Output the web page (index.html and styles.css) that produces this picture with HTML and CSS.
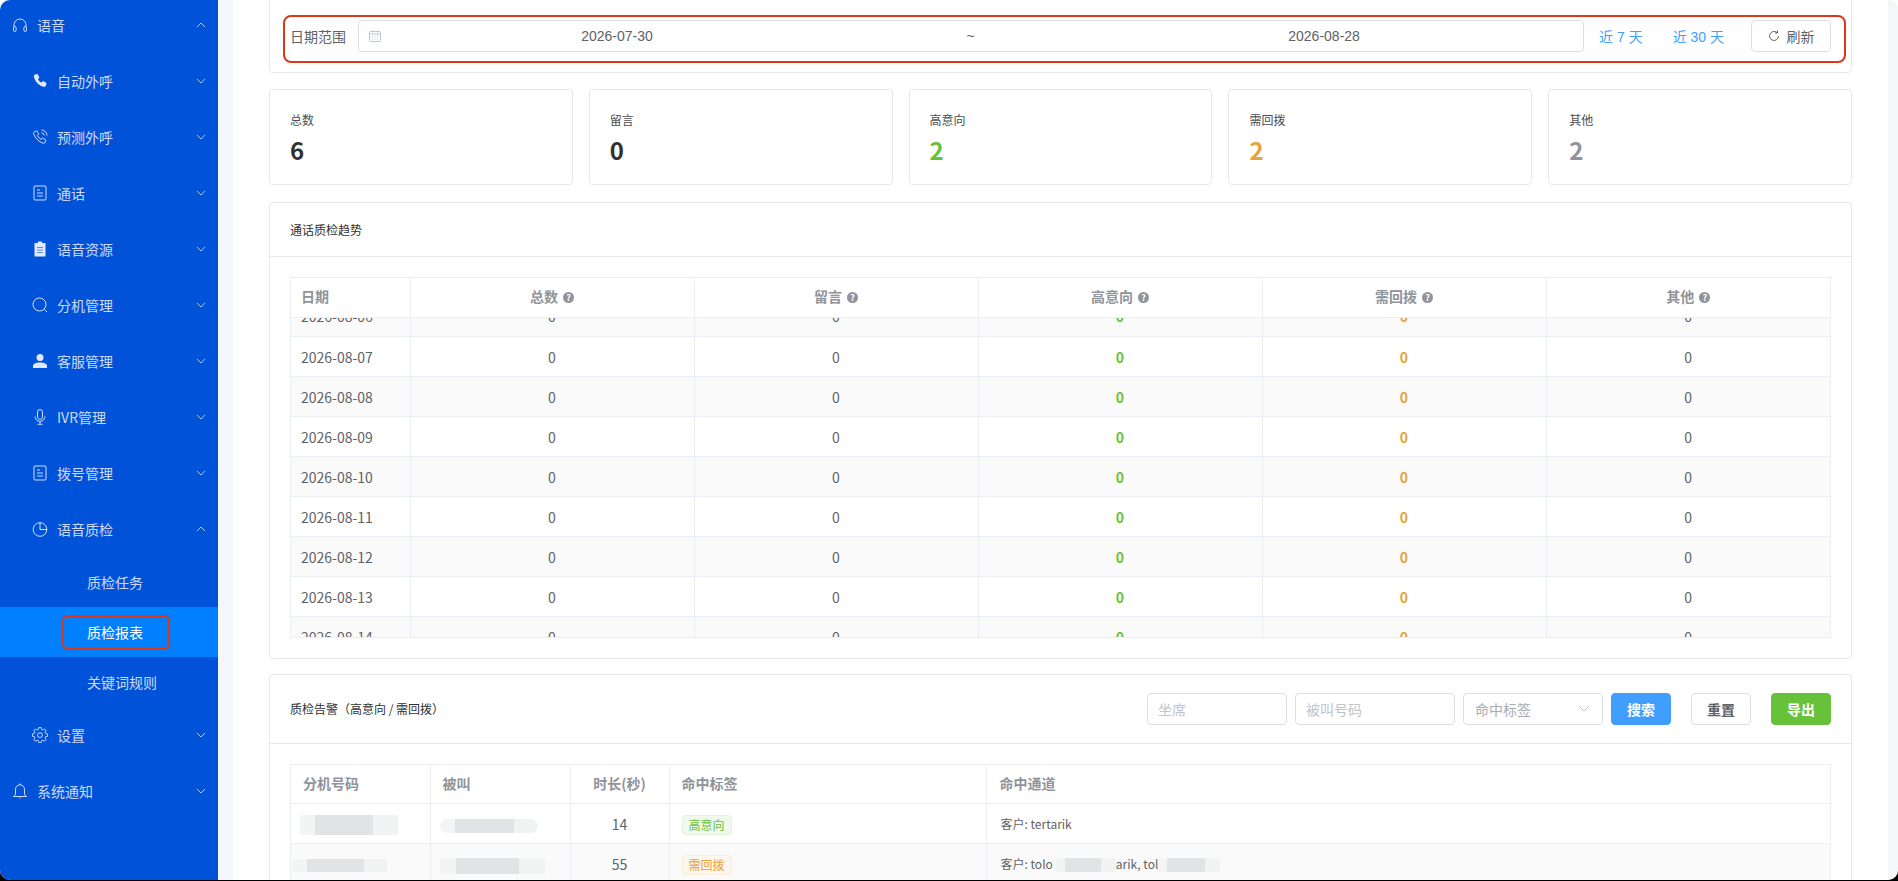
FILE: index.html
```html
<!DOCTYPE html>
<html lang="zh-CN">
<head>
  <meta charset="UTF-8">
  <meta name="viewport" content="width=device-width, initial-scale=1.0">
  <title>质检报表</title>
  <link rel="stylesheet" href="styles.css">
</head>
<body>
  <div class="frame">
    <div class="app">
      <aside class="sidebar">
        <nav class="nav">
          <a class="nav-item">
            <svg class="nav-icon" viewBox="0 0 16 16"><path class="line" d="M2 10V8a6 6 0 0 1 12 0v2"/><rect class="line" x="1.5" y="9.5" width="2.6" height="5" rx="1.3"/><rect class="line" x="11.9" y="9.5" width="2.6" height="5" rx="1.3"/></svg>
            <span>语音</span>
            <svg class="chevron" viewBox="0 0 10 6"><path d="M1 5l4-4 4 4"/></svg>
          </a>
          <a class="nav-item child">
            <svg class="nav-icon" viewBox="0 0 16 16"><path class="solid" d="M3 1.5L5.5 1l2 3.5L6 6c.6 1.6 2 3 3.5 3.6l1.5-1.5 3.5 2-.5 2.5c-.3.9-1.5 1.4-2.5 1.2C7 12.6 3.4 9 1.9 4c-.2-1 .3-2 1.1-2.5z"/></svg>
            <span>自动外呼</span>
            <svg class="chevron" viewBox="0 0 10 6"><path d="M1 1l4 4 4-4"/></svg>
          </a>
          <a class="nav-item child">
            <svg class="nav-icon" viewBox="0 0 16 16"><path class="line" d="M2.6 2.6L4.8 2l2 3.2L5.4 6.6c.8 1.6 2.2 3 3.8 3.8l1.4-1.4 3.2 2-.6 2.2c-.4.8-1.3 1.2-2.1 1C6.900 13 3 9.100 1.600 4.700c-.2-.8.2-1.700 1-2.100z"/><path class="line" d="M9.500 1a5.500 5.500 0 0 1 5.500 5.500M9.500 3.800a2.700 2.700 0 0 1 2.700 2.700"/></svg>
            <span>预测外呼</span>
            <svg class="chevron" viewBox="0 0 10 6"><path d="M1 1l4 4 4-4"/></svg>
          </a>
          <a class="nav-item child">
            <svg class="nav-icon" viewBox="0 0 16 16"><rect class="line" x="2" y="1" width="12" height="14" rx="1"/><path class="line" d="M5 5h3M5 8h6M5 11h6"/></svg>
            <span>通话</span>
            <svg class="chevron" viewBox="0 0 10 6"><path d="M1 1l4 4 4-4"/></svg>
          </a>
          <a class="nav-item child">
            <svg class="nav-icon" viewBox="0 0 16 16"><path class="solid" d="M6 0.500h4V2h3.500v13.500h-11V2H6z"/><path class="cut" d="M5 6.500h6M5 9h6M5 11.500h6"/></svg>
            <span>语音资源</span>
            <svg class="chevron" viewBox="0 0 10 6"><path d="M1 1l4 4 4-4"/></svg>
          </a>
          <a class="nav-item child">
            <svg class="nav-icon" viewBox="0 0 16 16"><circle class="line" cx="7.500" cy="7.500" r="6.500"/><path class="line" d="M12.500 12.500l2.500 2.500"/></svg>
            <span>分机管理</span>
            <svg class="chevron" viewBox="0 0 10 6"><path d="M1 1l4 4 4-4"/></svg>
          </a>
          <a class="nav-item child">
            <svg class="nav-icon" viewBox="0 0 16 16"><circle class="solid" cx="8" cy="4.500" r="3.500"/><path class="solid" d="M1 15v-2c0-2 2.500-3.500 7-3.500s7 1.500 7 3.500v2z"/></svg>
            <span>客服管理</span>
            <svg class="chevron" viewBox="0 0 10 6"><path d="M1 1l4 4 4-4"/></svg>
          </a>
          <a class="nav-item child">
            <svg class="nav-icon" viewBox="0 0 16 16"><rect class="line" x="5.500" y="0.500" width="5" height="10" rx="2.500"/><path class="line" d="M3 7.500a5 5 0 0 0 10 0M8 12.500V15M5.500 15.300h5"/></svg>
            <span>IVR管理</span>
            <svg class="chevron" viewBox="0 0 10 6"><path d="M1 1l4 4 4-4"/></svg>
          </a>
          <a class="nav-item child">
            <svg class="nav-icon" viewBox="0 0 16 16"><rect class="line" x="2" y="1" width="12" height="14" rx="1"/><path class="line" d="M5 5h3M5 8h6M5 11h6"/></svg>
            <span>拨号管理</span>
            <svg class="chevron" viewBox="0 0 10 6"><path d="M1 1l4 4 4-4"/></svg>
          </a>
          <a class="nav-item child">
            <svg class="nav-icon" viewBox="0 0 16 16"><circle class="line" cx="8" cy="8.500" r="6.800"/><path class="line" d="M8 1.700v6.800h6.800"/></svg>
            <span>语音质检</span>
            <svg class="chevron" viewBox="0 0 10 6"><path d="M1 5l4-4 4 4"/></svg>
          </a>
          <a class="sub-item">质检任务</a>
          <a class="sub-item active"><span class="mark">质检报表</span></a>
          <a class="sub-item">关键词规则</a>
          <a class="nav-item child">
            <svg class="nav-icon" viewBox="-0.500 0.500 17 17"><path class="line" d="M6.800 1h2.400l.4 2 1.500.7 1.800-1.100 1.600 1.600-1.100 1.800.7 1.500 2 .4v2.400l-2 .4-.7 1.500 1.100 1.800-1.600 1.600-1.800-1.100-1.500.7-.4 2H6.800l-.4-2-1.500-.7-1.800 1.100-1.600-1.600 1.100-1.800-.7-1.500-2-.4V7.900l2-.4.7-1.500-1.100-1.800 1.600-1.600 1.800 1.100 1.500-.7z"/><circle class="line" cx="8" cy="9.100" r="2.600"/></svg>
            <span>设置</span>
            <svg class="chevron" viewBox="0 0 10 6"><path d="M1 1l4 4 4-4"/></svg>
          </a>
          <a class="nav-item">
            <svg class="nav-icon" viewBox="0 0 16 16"><path class="line" d="M8 1.800a4.500 4.500 0 0 0-4.500 4.500v5.200L1.500 13.500h13l-2-2V6.300A4.500 4.500 0 0 0 8 1.800zM8 .5v1.300M8 14.500v1"/></svg>
            <span>系统通知</span>
            <svg class="chevron" viewBox="0 0 10 6"><path d="M1 1l4 4 4-4"/></svg>
          </a>
        </nav>
      </aside>

      <main class="main">
        <div class="content">
          <section class="card filter-card">
            <form class="date-form">
              <label class="date-label">日期范围</label>
              <div class="date-range">
                <svg class="calendar" viewBox="0 0 12 12"><rect x="0.500" y="1.500" width="11" height="10" rx="1"/><path d="M0.500 4h11M3 0.500v2M9 0.500v2M3 6.500h1M5.500 6.500h1M8 6.500h1M3 9h1M5.500 9h1M8 9h1"/></svg>
                <span class="date-value">2026-07-30</span>
                <span class="date-value">~</span>
                <span class="date-value">2026-08-28</span>
              </div>
              <a class="quick first">近 7 天</a>
              <a class="quick">近 30 天</a>
              <button type="button" class="refresh">
                <svg class="refresh-icon" viewBox="0 0 12 12"><path d="M10.500 6A4.500 4.500 0 1 1 9 2.600"/><path d="M9.500 0.500v2.500H7"/></svg>
                刷新
              </button>
            </form>
          </section>

          <section class="stats">
            <div class="card stat"><div class="stat-label">总数</div><div class="stat-value">6</div></div>
            <div class="card stat"><div class="stat-label">留言</div><div class="stat-value">0</div></div>
            <div class="card stat"><div class="stat-label">高意向</div><div class="stat-value green">2</div></div>
            <div class="card stat"><div class="stat-label">需回拨</div><div class="stat-value orange">2</div></div>
            <div class="card stat"><div class="stat-label">其他</div><div class="stat-value gray">2</div></div>
          </section>

          <section class="card panel">
            <div class="panel-head trend-head">通话质检趋势</div>
            <div class="panel-body">
              <div class="table-wrap">
                <table class="trend">
                  <thead>
                    <tr>
                      <th class="date-col">日期</th>
                      <th>总数 <span class="help">?</span></th>
                      <th>留言 <span class="help">?</span></th>
                      <th>高意向 <span class="help">?</span></th>
                      <th>需回拨 <span class="help">?</span></th>
                      <th>其他 <span class="help">?</span></th>
                    </tr>
                  </thead>
                </table>
                <div class="trend-scroll">
                  <table class="trend trend-rows">
                    <tbody>
                      <tr><td class="date-col">2026-08-06</td><td>0</td><td>0</td><td class="green">0</td><td class="orange">0</td><td>0</td></tr>
                      <tr><td class="date-col">2026-08-07</td><td>0</td><td>0</td><td class="green">0</td><td class="orange">0</td><td>0</td></tr>
                      <tr><td class="date-col">2026-08-08</td><td>0</td><td>0</td><td class="green">0</td><td class="orange">0</td><td>0</td></tr>
                      <tr><td class="date-col">2026-08-09</td><td>0</td><td>0</td><td class="green">0</td><td class="orange">0</td><td>0</td></tr>
                      <tr><td class="date-col">2026-08-10</td><td>0</td><td>0</td><td class="green">0</td><td class="orange">0</td><td>0</td></tr>
                      <tr><td class="date-col">2026-08-11</td><td>0</td><td>0</td><td class="green">0</td><td class="orange">0</td><td>0</td></tr>
                      <tr><td class="date-col">2026-08-12</td><td>0</td><td>0</td><td class="green">0</td><td class="orange">0</td><td>0</td></tr>
                      <tr><td class="date-col">2026-08-13</td><td>0</td><td>0</td><td class="green">0</td><td class="orange">0</td><td>0</td></tr>
                      <tr><td class="date-col">2026-08-14</td><td>0</td><td>0</td><td class="green">0</td><td class="orange">0</td><td>0</td></tr>
                    </tbody>
                  </table>
                </div>
              </div>
            </div>
          </section>

          <section class="card panel">
            <div class="panel-head alert-head">
              <span>质检告警（高意向 / 需回拨）</span>
              <div class="filters">
                <input class="field agent" placeholder="坐席">
                <input class="field callee" placeholder="被叫号码">
                <div class="field select">命中标签<svg class="select-arrow" viewBox="0 0 12 7"><path d="M1 1l5 5 5-5"/></svg></div>
                <button type="button" class="btn primary">搜索</button>
                <button type="button" class="btn plain">重置</button>
                <button type="button" class="btn success">导出</button>
              </div>
            </div>
            <div class="panel-body">
              <div class="table-wrap">
                <table class="alerts">
                  <thead>
                    <tr>
                      <th class="col-ext">分机号码</th>
                      <th class="col-callee">被叫</th>
                      <th class="col-time">时长(秒)</th>
                      <th class="col-tag">命中标签</th>
                      <th>命中通道</th>
                    </tr>
                  </thead>
                  <tbody>
                    <tr>
                      <td><span class="blur blur-a"></span></td>
                      <td><span class="blur blur-b"></span></td>
                      <td class="col-time">14</td>
                      <td><span class="tag tag-green">高意向</span></td>
                      <td class="channel">客户: tertarik</td>
                    </tr>
                    <tr>
                      <td><span class="blur blur-c"></span></td>
                      <td><span class="blur blur-d"></span></td>
                      <td class="col-time">55</td>
                      <td><span class="tag tag-orange">需回拨</span></td>
                      <td class="channel">客户: tolo<span class="blur blur-e"></span>arik, tol<span class="blur blur-f"></span></td>
                    </tr>
                  </tbody>
                </table>
              </div>
            </div>
          </section>
        </div>
      </main>
      <div class="scroll-track"></div>
    </div>
  </div>
</body>
</html>
```

FILE: styles.css
```css
* {
  box-sizing: border-box;
}

html,
body {
  height: 100%;
}

body {
  margin: 0;
  overflow: hidden;
  background: #fff;
  font-family: "Noto Sans CJK SC", "Noto Sans", sans-serif;
  font-size: 14px;
  color: #606266;
}

.frame {
  height: 881px;
  padding-bottom: 1px;
  background: linear-gradient(#fff 50%, #000 50%);
}

.app {
  display: flex;
  height: 880px;
  overflow: hidden;
  border-radius: 10px;
  background: #f5f6fa;
}

/* sidebar */
.sidebar {
  flex: 0 0 218px;
  overflow: hidden;
  background: #0052d9;
}

.nav {
  margin-top: -3px;
}

.nav-item {
  display: flex;
  align-items: center;
  height: 56px;
  padding: 0 12px;
  color: rgba(255, 255, 255, 0.8);
}

.nav-item.child {
  padding-left: 32px;
}

.nav-item span {
  flex: 1;
  margin-left: 9px;
}

.nav-icon {
  flex: none;
  width: 16px;
  height: 16px;
}

.nav-icon .line {
  fill: none;
  stroke: rgba(255, 255, 255, 0.8);
  stroke-width: 1;
}

.nav-icon .solid {
  fill: rgba(255, 255, 255, 0.88);
}

.nav-icon .cut {
  fill: none;
  stroke: #5f8fe3;
  stroke-width: 1;
}

.chevron {
  flex: none;
  width: 10px;
  height: 6px;
}

.chevron path {
  fill: none;
  stroke: rgba(255, 255, 255, 0.7);
  stroke-width: 1;
}

.sub-item {
  display: flex;
  align-items: center;
  height: 50px;
  padding-left: 87px;
  color: rgba(255, 255, 255, 0.8);
}

.sub-item.active {
  background: #007fff;
  color: #fff;
}

.mark {
  height: 35px;
  margin-left: -25px;
  padding: 0 25px 0 23px;
  border: 2px solid #d9391a;
  border-radius: 6px;
  line-height: 31px;
}

/* main area */
.main {
  flex: 1;
  min-width: 0;
  margin-left: 15px;
  padding: 0 36px;
  overflow: hidden;
  background: #fff;
}

.content {
  margin-top: -10px;
}

.scroll-track {
  flex: 0 0 10px;
  border-top-left-radius: 8px;
  background: #f5f6fa;
}

.card {
  border: 1px solid #e6e8f0;
  border-radius: 4px;
  background: #fff;
}

.filter-card {
  padding: 24px 5px 9px 13px;
}

.date-form {
  display: flex;
  align-items: center;
  height: 48px;
  padding: 3px 13px 9px 5px;
  border: 2px solid #d9391a;
  border-radius: 8px;
}

.date-label {
  margin-right: 12px;
}

.date-range {
  display: grid;
  flex: 1;
  grid-template-columns: 24px 468px 1fr 468px 25px;
  align-items: center;
  height: 32px;
  border: 1px solid #dcdfe6;
  border-radius: 4px;
  font-family: "Liberation Sans", sans-serif;
}

.date-value {
  text-align: center;
}

.calendar {
  width: 12px;
  height: 12px;
  margin-left: 10px;
}

.calendar rect,
.calendar path {
  fill: none;
  stroke: #c0c4cc;
  stroke-width: 1;
}

.quick {
  margin-left: 30px;
  color: #409eff;
  font-family: "Liberation Sans", "Noto Sans CJK SC", sans-serif;
}

.quick.first {
  margin-left: 15px;
}

.refresh {
  display: flex;
  align-items: center;
  justify-content: center;
  gap: 7px;
  width: 80px;
  height: 32px;
  margin-left: 27px;
  padding: 0;
  border: 1px solid #dcdfe6;
  border-radius: 4px;
  background: #fff;
  color: #606266;
  font: inherit;
}

.refresh-icon {
  width: 12px;
  height: 12px;
}

.refresh-icon path {
  fill: none;
  stroke: #606266;
  stroke-width: 1;
}

/* stat cards */
.stats {
  display: grid;
  grid-template-columns: repeat(5, 1fr);
  gap: 16px;
  margin-top: 16px;
}

.stat {
  height: 96px;
  padding: 20px 20px 0;
}

.stat-label {
  font-size: 12px;
  line-height: 20px;
  color: #4c4e52;
}

.stat-value {
  margin-top: 5px;
  font-size: 24px;
  font-weight: 700;
  line-height: 30px;
  color: #303133;
}

.stat-value.green,
td.green {
  color: #67c23a;
}

.stat-value.orange,
td.orange {
  color: #e6a23c;
}

.stat-value.gray {
  color: #909399;
}

td.green,
td.orange {
  font-weight: 700;
}

/* panels */
.panel {
  margin-top: 17px;
}

.panel + .panel {
  margin-top: 15px;
}

.panel-head {
  display: flex;
  align-items: center;
  padding: 0 20px;
  border-bottom: 1px solid #e6e8f0;
  font-size: 12px;
  color: #303133;
}

.trend-head {
  height: 54px;
}

.alert-head {
  justify-content: space-between;
  height: 69px;
}

.panel-body {
  padding: 20px;
}

.table-wrap {
  border: 1px solid #ebeef5;
  background: #fff;
}

table {
  width: 100%;
  border-collapse: collapse;
  table-layout: fixed;
}

th,
td {
  height: 40px;
  padding: 0 12px;
  border-right: 1px solid #ebeef5;
  border-bottom: 1px solid #ebeef5;
  text-align: center;
}

th {
  height: 39px;
  padding-bottom: 2px;
  color: #909399;
  font-weight: 700;
}

th:last-child,
td:last-child {
  border-right: none;
}

.date-col {
  width: 119px;
  padding-left: 10px;
  text-align: left;
}

.trend-scroll {
  height: 319px;
  overflow: hidden;
}

.trend-rows {
  margin-top: -21px;
}

.trend-rows tr:nth-child(odd),
.alerts tbody tr:nth-child(even) {
  background: #fafafa;
}

.help {
  display: inline-block;
  width: 11px;
  height: 11px;
  margin-left: 2px;
  border-radius: 50%;
  background: #909399;
  color: #fff;
  font-size: 9px;
  line-height: 11px;
  text-align: center;
  vertical-align: 1px;
}

/* alert filters */
.filters {
  display: flex;
  align-items: center;
  gap: 8px;
}

.field {
  height: 32px;
  padding: 0 10px;
  border: 1px solid #dcdfe6;
  border-radius: 4px;
  background: #fff;
  color: #606266;
  font: 14px "Noto Sans CJK SC", "Noto Sans", sans-serif;
  outline: none;
}

.field::placeholder {
  color: #c0c4cc;
}

.agent,
.select {
  width: 140px;
}

.callee {
  width: 160px;
}

.select {
  display: flex;
  align-items: center;
  justify-content: space-between;
  padding: 0 12px 0 11px;
  color: #a8abb2;
}

.select-arrow {
  width: 12px;
  height: 7px;
}

.select-arrow path {
  fill: none;
  stroke: #c0c4cc;
  stroke-width: 1;
}

.btn {
  width: 60px;
  height: 32px;
  padding: 0;
  border: 1px solid #dcdfe6;
  border-radius: 4px;
  font: 700 14px "Noto Sans CJK SC", "Noto Sans", sans-serif;
}

.btn.primary {
  border-color: #409eff;
  background: #409eff;
  color: #fff;
}

.btn.plain {
  margin-left: 12px;
  background: #fff;
  color: #606266;
}

.btn.success {
  margin-left: 12px;
  border-color: #67c23a;
  background: #67c23a;
  color: #fff;
}

/* alert table */
.alerts th,
.alerts td {
  text-align: left;
}

.alerts .col-time {
  text-align: center;
}

.alerts th:last-child {
  padding-left: 13px;
}

.col-ext {
  width: 139px;
}

.col-callee {
  width: 140px;
}

th.col-time {
  width: 99px;
}

.col-tag {
  width: 317px;
}

.channel {
  font-size: 12px;
  white-space: nowrap;
}

.alerts td.channel {
  padding-left: 14px;
}

.tag {
  display: inline-block;
  height: 20px;
  padding: 0 6px;
  border: 1px solid;
  border-radius: 4px;
  font-size: 12px;
  line-height: 18px;
  vertical-align: middle;
}

.tag-green {
  border-color: #e1f3d8;
  background: #f0f9eb;
  color: #67c23a;
}

.tag-orange {
  border-color: #faecd8;
  background: #fdf6ec;
  color: #e6a23c;
}

.blur {
  display: inline-block;
  vertical-align: middle;
  background: linear-gradient(90deg, #f3f4f4 0 15%, #e2e3e4 15% 75%, #f1f3f2 75%);
}

.blur-a {
  width: 98px;
  height: 20px;
  margin-left: -3px;
}

.blur-b {
  width: 98px;
  height: 14px;
  margin-left: -3px;
  border-radius: 7px;
}

.blur-c {
  width: 94px;
  height: 13px;
  margin-left: -10px;
}

.blur-d {
  width: 105px;
  height: 16px;
  margin-left: -3px;
}

.blur-e {
  width: 60px;
  height: 14px;
  margin-left: 3px;
}

.blur-f {
  width: 62px;
  height: 14px;
}
```
